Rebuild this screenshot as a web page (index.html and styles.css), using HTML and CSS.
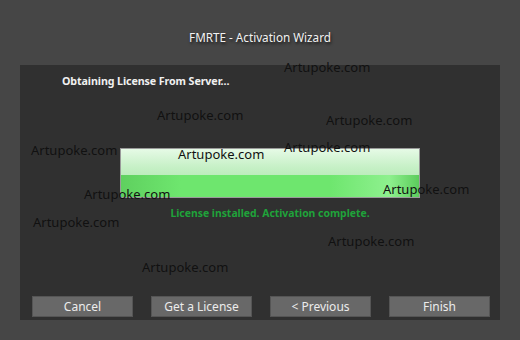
FILE: index.html
```html
<!DOCTYPE html>
<html lang="en">
<head>
    <meta charset="UTF-8">
    <title>FMRTE - Activation Wizard</title>
    <link rel="stylesheet" href="styles.css">
</head>
<body>
    <div class="window">
        <div class="titlebar">FMRTE - Activation Wizard</div>
        <div class="panel">
            <h1 class="step">Obtaining License From Server...</h1>
            <div class="progress-area">
                <div class="progress">
                    <div class="progress-top"></div>
                    <div class="progress-bottom"></div>
                </div>
                <p class="status">License installed. Activation complete.</p>
            </div>
            <div class="buttons">
                <button class="btn">Cancel</button>
                <button class="btn">Get a License</button>
                <button class="btn">&lt; Previous</button>
                <button class="btn">Finish</button>
            </div>
        </div>
        <div class="watermarks">
            <span class="wm" style="left:284px;top:59px">Artupoke.com</span>
            <span class="wm" style="left:157px;top:107px">Artupoke.com</span>
            <span class="wm" style="left:326px;top:112px">Artupoke.com</span>
            <span class="wm" style="left:31px;top:142px">Artupoke.com</span>
            <span class="wm" style="left:178px;top:146px">Artupoke.com</span>
            <span class="wm" style="left:284px;top:139px">Artupoke.com</span>
            <span class="wm" style="left:84px;top:186px">Artupoke.com</span>
            <span class="wm" style="left:383px;top:181px">Artupoke.com</span>
            <span class="wm" style="left:33px;top:214px">Artupoke.com</span>
            <span class="wm" style="left:328px;top:233px">Artupoke.com</span>
            <span class="wm" style="left:142px;top:259px">Artupoke.com</span>
        </div>
    </div>
</body>
</html>
```

FILE: styles.css
```css
body {
    margin: 0;
    background: #464646;
    font-family: 'Noto Sans', 'Open Sans', sans-serif;
}
.window {
    position: relative;
    width: 520px;
    height: 340px;
}
.titlebar {
    height: 65px;
    line-height: 74px;
    text-align: center;
    color: #f2f2f2;
    font-size: 11.7px;
    text-shadow: 1px 2px 3px rgba(0, 0, 0, 0.7);
}
.panel {
    margin: 0 20px;
    height: 255px;
    background: #303030;
    display: flex;
    flex-direction: column;
}
.step {
    margin: 9px 0 0 42px;
    font-size: 10.7px;
    font-weight: bold;
    color: #f0f0f0;
    line-height: 14px;
    letter-spacing: -0.1px;
}
.progress-area {
    margin: 60px 0 0 100px;
    width: 300px;
}
.progress {
    height: 48px;
    border: 1px solid #9a9a9a;
    display: flex;
    flex-direction: column;
}
.progress-top {
    height: 26px;
    background: linear-gradient(to bottom, #e6fae6, #c6f0c6 70%, #bdecbd);
}
.progress-bottom {
    flex: 1;
    background: linear-gradient(to right, #5fd05f, #6ee66e 20%, #6ee66e 70%, #8ef08e 90%, #5ccc5c);
}
.status {
    margin: 8px 0 0;
    text-align: center;
    font-size: 10.4px;
    font-weight: bold;
    color: #1fa33a;
}
.buttons {
    margin-top: auto;
    margin-bottom: 3px;
    padding: 0 10px 0 12px;
    display: flex;
    gap: 18px;
}
.btn {
    width: 101px;
    height: 21px;
    padding: 0;
    background: #686868;
    border: 1px solid #555;
    color: #ececec;
    font-family: inherit;
    font-size: 12px;
}
.watermarks {
    position: absolute;
    inset: 0;
    pointer-events: none;
}
.wm {
    position: absolute;
    font-size: 13px;
    line-height: 16px;
    color: #111;
}
```
